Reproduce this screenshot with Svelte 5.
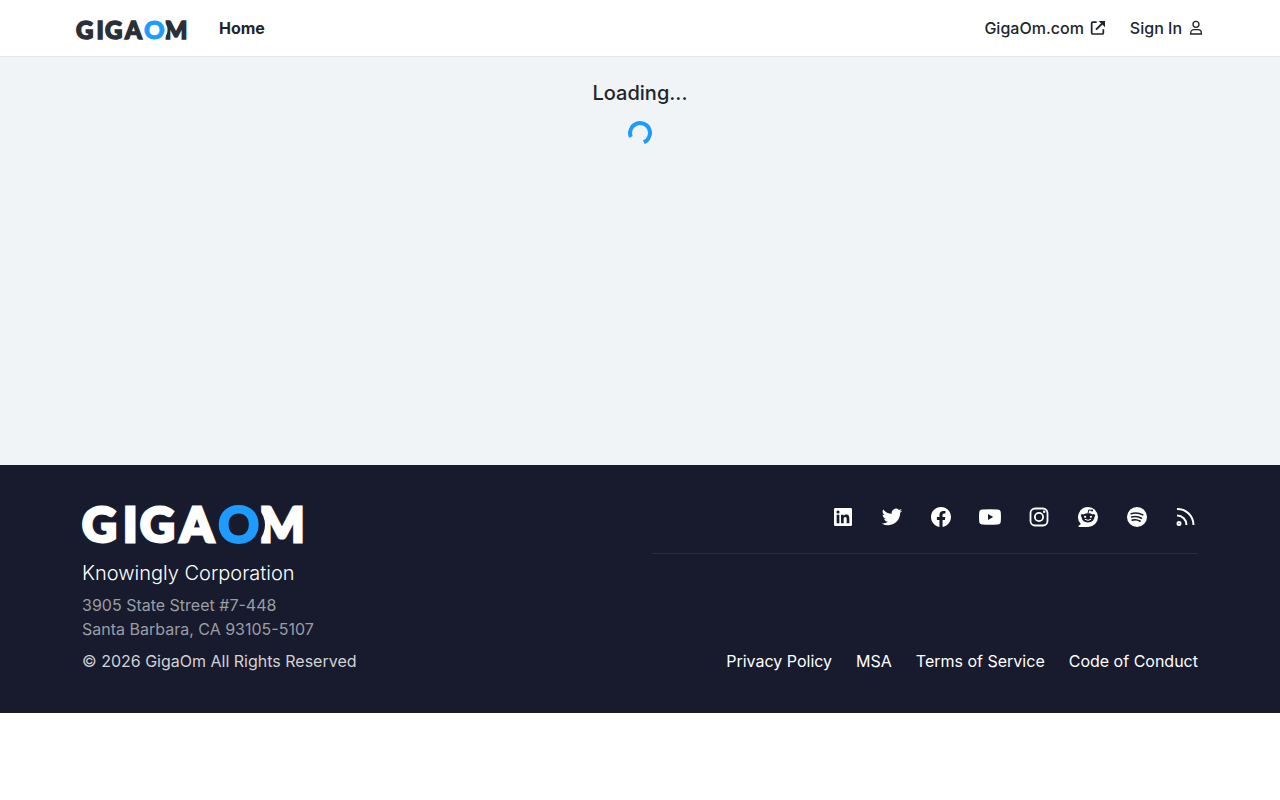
<script lang="ts">
  const legalLinks = [
    { label: 'Privacy Policy', href: '/privacy' },
    { label: 'MSA', href: '/msa' },
    { label: 'Terms of Service', href: '/terms' },
    { label: 'Code of Conduct', href: '/conduct' }
  ];
</script>

{#snippet logo()}
  <svg class="logo" viewBox="0 0 222 40" role="img" aria-label="GigaOm">
    <text class="letters" y="37">
      <tspan x="0">G</tspan><tspan x="41">I</tspan><tspan x="58">G</tspan><tspan x="98">A</tspan><tspan x="177">M</tspan>
    </text>
    <circle class="logo-gap" cx="160" cy="20" r="23" />
    <text class="logo-o" x="136" y="38">O</text>
  </svg>
{/snippet}

<header>
  <nav class="navbar" aria-label="Main">
    <a href="/" class="brand">{@render logo()}</a>
    <a href="/" class="nav-link active">Home</a>
    <div class="nav-right">
      <a href="https://gigaom.com" class="nav-link">
        GigaOm.com
        <svg viewBox="0 0 24 24" aria-hidden="true">
          <g fill="none" stroke="currentColor" stroke-width="2.600">
            <path d="M10 3.300H4.500a2 2 0 0 0-2 2V19a2 2 0 0 0 2 2H18a2 2 0 0 0 2-2v-5" />
            <path d="M9 14.500L18.500 5" stroke-width="3" />
          </g>
          <path d="M13 1.500h9.500V11z" />
        </svg>
      </a>
      <a href="/login" class="nav-link">
        Sign In
        <svg viewBox="0 0 24 24" aria-hidden="true">
          <path d="M20 21H4v-1.500a5 5 0 0 1 5-5h6a5 5 0 0 1 5 5V21zM12 11a4.500 4.500 0 1 1 0-9 4.500 4.500 0 0 1 0 9z" fill="none" stroke="currentColor" stroke-width="2" />
        </svg>
      </a>
    </div>
  </nav>
</header>

<main>
  <p class="loading">Loading...</p>
  <div class="spinner" role="status" aria-label="Loading"></div>
</main>

<footer>
  <div class="footer-inner">
    <div class="company">
      <a href="/" class="footer-logo">{@render logo()}</a>
      <p class="name">Knowingly Corporation</p>
      <address>3905 State Street #7-448<br />Santa Barbara, CA 93105-5107</address>
      <p class="copyright">© 2026 GigaOm All Rights Reserved</p>
    </div>

    <div class="footer-links">
      <div class="social">
        <a href="https://linkedin.com" aria-label="LinkedIn">
          <svg viewBox="0 0 24 24">
            <path d="M18.335 18.339H15.67v-4.177c0-.996-.02-2.278-1.39-2.278-1.389 0-1.601 1.084-1.601 2.205v4.25h-2.666V9.75h2.56v1.17h.035c.358-.674 1.228-1.387 2.528-1.387 2.7 0 3.2 1.778 3.2 4.091v4.715zM7.003 8.575a1.546 1.546 0 0 1-1.548-1.549 1.548 1.548 0 1 1 1.547 1.549zm1.336 9.764H5.666V9.75H8.34v8.589zM19.67 3H4.329C3.593 3 3 3.58 3 4.297v15.406C3 20.42 3.594 21 4.328 21h15.338C20.4 21 21 20.42 21 19.703V4.297C21 3.58 20.4 3 19.666 3h.003z" />
          </svg>
        </a>
        <a href="https://twitter.com" aria-label="Twitter">
          <svg viewBox="0 0 24 24">
            <path d="M22.162 5.656a8.384 8.384 0 0 1-2.402.658A4.196 4.196 0 0 0 21.6 4c-.82.488-1.719.83-2.656 1.015a4.182 4.182 0 0 0-7.126 3.814 11.874 11.874 0 0 1-8.62-4.37 4.168 4.168 0 0 0-.566 2.103c0 1.45.738 2.731 1.86 3.481a4.168 4.168 0 0 1-1.894-.523v.052a4.185 4.185 0 0 0 3.355 4.101 4.21 4.21 0 0 1-1.89.072A4.185 4.185 0 0 0 7.97 16.65a8.394 8.394 0 0 1-6.191 1.732 11.83 11.83 0 0 0 6.41 1.88c7.693 0 11.9-6.373 11.9-11.9 0-.18-.005-.362-.013-.54a8.496 8.496 0 0 0 2.087-2.165z" />
          </svg>
        </a>
        <a href="https://facebook.com" aria-label="Facebook">
          <svg viewBox="0 0 24 24">
            <path d="M12 2C6.477 2 2 6.477 2 12c0 4.991 3.657 9.128 8.438 9.879V14.89h-2.54V12h2.54V9.797c0-2.506 1.492-3.89 3.777-3.89 1.094 0 2.238.195 2.238.195v2.46h-1.26c-1.243 0-1.63.771-1.63 1.562V12h2.773l-.443 2.89h-2.33v6.989C18.343 21.129 22 16.99 22 12c0-5.523-4.477-10-10-10z" />
          </svg>
        </a>
        <a href="https://youtube.com" aria-label="YouTube">
          <svg viewBox="0 0 24 24">
            <path d="M4.500 4.500Q12 3.900 19.500 4.500 22.600 4.700 22.800 7.600 23.200 12 22.800 16.400 22.600 19.300 19.500 19.500 12 20.100 4.500 19.500 1.400 19.300 1.200 16.400.800 12 1.200 7.600 1.400 4.700 4.500 4.500zM10 9v6l5.200-3z" fill-rule="evenodd" />
          </svg>
        </a>
        <a href="https://instagram.com" aria-label="Instagram">
          <svg viewBox="0 0 24 24">
            <g fill="none" stroke="currentColor" stroke-width="1.8">
              <rect x="3.500" y="3.500" width="17" height="17" rx="4.500" />
              <circle cx="12" cy="12" r="4.100" />
            </g>
            <circle cx="17.200" cy="6.800" r="1.250" />
          </svg>
        </a>
        <a href="https://reddit.com" aria-label="Reddit">
          <svg viewBox="0 0 24 24">
            <path d="M12 2a10 10 0 1 1 0 20H3.200c-.7 0-1-.7-.6-1.200L4.900 19A10 10 0 0 1 12 2z" />
            <g class="cut">
              <path d="M12 8.200c1.900 0 3.500.5 4.700 1.300a1.450 1.450 0 1 1 1.700 2.300c.1 3.500-2.700 5.700-6.400 5.700s-6.500-2.200-6.400-5.700a1.450 1.450 0 1 1 1.700-2.300A9 9 0 0 1 12 8.200z" />
              <circle cx="16" cy="5.500" r="1.100" />
              <path d="M12 8.500l.8-3.600 3 .6" class="cut-line" />
            </g>
            <circle cx="9.100" cy="11.800" r="1.100" />
            <circle cx="14.900" cy="11.800" r="1.100" />
            <path d="M9.200 14.500q2.800 1.900 5.600 0" fill="none" stroke="currentColor" stroke-width="1" stroke-linecap="round" />
          </svg>
        </a>
        <a href="https://spotify.com" aria-label="Spotify">
          <svg viewBox="0 0 24 24">
            <circle cx="12" cy="12" r="10" />
            <g class="cut-line bands">
              <path d="M6.200 8.700c3.800-1.100 8.100-.7 11.600 1.200" />
              <path d="M6.700 12c3.300-.9 6.900-.5 9.800 1.200" />
              <path d="M7.200 15.100c2.700-.6 5.600-.3 8 1.100" />
            </g>
          </svg>
        </a>
        <a href="/feed" aria-label="RSS">
          <svg viewBox="0 0 24 24">
            <g fill="none" stroke="currentColor" stroke-width="2">
              <circle cx="5" cy="18.500" r="1.500" />
              <path d="M3 10.500a9.500 9.500 0 0 1 9.500 9.500M3 4a16 16 0 0 1 16.500 16" />
            </g>
          </svg>
        </a>
      </div>
      <ul class="legal">
        {#each legalLinks as link}
          <li><a href={link.href}>{link.label}</a></li>
        {/each}
      </ul>
    </div>
  </div>
</footer>

<style>
  :global(body) {
    margin: 0;
    background: #fff;
    font-family: Inter, sans-serif;
    font-size: 16px;
    line-height: 24px;
    color: #212529;
  }
  a { color: inherit; text-decoration: none; }
  p, ul { margin: 0; padding: 0; }
  svg { display: block; fill: currentColor; }

  /* Logo */
  .logo { overflow: visible; }
  .logo text { font-family: Lato, sans-serif; font-size: 48px; font-weight: 900; line-height: 1; }
  .logo .letters { stroke: currentColor; stroke-width: 3px; }
  .logo .logo-gap { fill: var(--logo-bg); }
  .logo .logo-o { font-size: 51px; fill: #1e9bff; stroke: #1e9bff; stroke-width: 2px; }

  /* Navbar */
  header { --logo-bg: #fff; background: #fff; border-bottom: 1px solid #e2e8ec; }
  .navbar {
    display: flex; align-items: center; gap: 32px;
    box-sizing: border-box; max-width: 1128px; height: 56px; margin: 0 auto;
  }
  .brand { width: 111px; padding-top: 4px; color: #2b2f36; }
  .nav-link { display: flex; align-items: center; gap: 6px; font-weight: 500; }
  .nav-link.active { font-weight: 700; }
  .nav-link svg { width: 16px; height: 16px; }
  .nav-right { display: flex; gap: 24px; margin-left: auto; }

  /* Loading state */
  main {
    display: flex; flex-direction: column; align-items: center; gap: 16px;
    box-sizing: border-box; min-height: 408px; padding: 24px 12px;
    background: #f0f4f7;
  }
  .loading { font-size: 20px; font-weight: 500; }
  .spinner {
    box-sizing: border-box; width: 24px; height: 24px;
    border: 4px solid #1e9bff; border-radius: 50%;
    border-bottom-color: transparent;
    transform: rotate(22deg);
  }

  /* Footer */
  footer { --logo-bg: #171b2d; padding: 40px 12px; background: #171b2d; color: #fff; }
  .footer-inner {
    display: grid; grid-template-columns: 1fr 1fr; gap: 24px;
    max-width: 1116px; margin: 0 auto;
  }
  .footer-logo { display: block; width: 222px; }
  .name { margin-top: 14px; font-size: 20px; font-weight: 300; line-height: 28px; }
  address { margin-top: 6px; font-style: normal; color: #9b9da5; }
  .copyright { margin-top: 8px; color: #d1d2d5; }
  .footer-links { display: flex; flex-direction: column; justify-content: space-between; }
  .social {
    display: flex; justify-content: flex-end; gap: 25px;
    padding-bottom: 24px; border-bottom: 1px solid #2a2e3e;
  }
  .social svg { width: 24px; height: 24px; }
  .cut { fill: #171b2d; }
  .cut-line { fill: none; stroke: #171b2d; stroke-width: 1; }
  .bands { stroke-width: 1.600; stroke-linecap: round; }
  .legal { display: flex; justify-content: flex-end; gap: 24px; list-style: none; }
</style>
